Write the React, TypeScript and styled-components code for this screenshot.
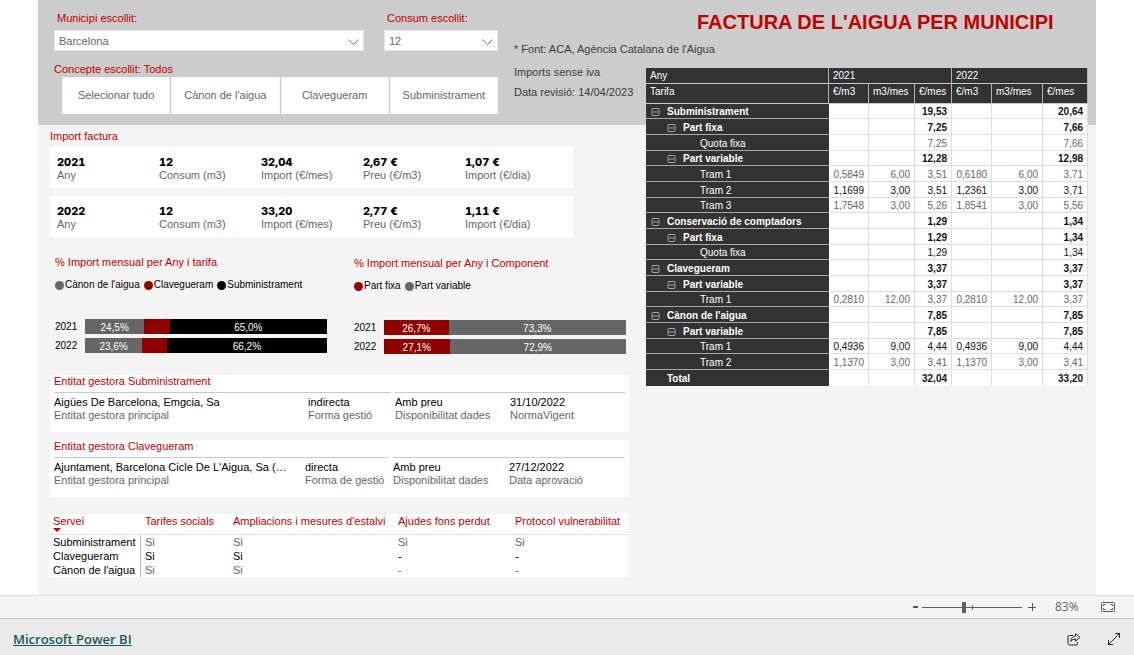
import React, { useState } from 'react';
import styled, { createGlobalStyle } from 'styled-components';

const GlobalStyle = createGlobalStyle`
  *, *::before, *::after { box-sizing: border-box; }
  body {
    margin: 0;
    background: #fff;
    color: #000;
    font-family: "Liberation Sans", Arial, sans-serif;
    font-size: 11px;
    line-height: 13px;
  }
  button, select, input { font: inherit; color: inherit; margin: 0; }
  h1, h2, p, dl, dd, dt, ul { margin: 0; padding: 0; font: inherit; }
`;

const RED = '#c00000';
const MUTED = '#666';

const Page = styled.div`
  display: flex;
  flex-direction: column;
  min-height: 100vh;
`;

const Canvas = styled.main`
  flex: 1;
  display: grid;
  grid-template-columns: 608fr 450fr;
  width: 100%;
  max-width: 1058px;
  margin: 0 auto;
  background: linear-gradient(#ccc 125px, #f4f4f4 125px);
`;

const LeftColumn = styled.div`
  min-width: 0;
`;

const RightColumn = styled.div`
  min-width: 0;
  padding-right: 8px;
`;

/* Filter band */

const FilterBand = styled.header`
  display: flex;
  height: 125px;
  padding-left: 16px;
`;

const Filters = styled.div`
  flex: 0 0 444px;
  padding-top: 12px;
`;

const FilterRow = styled.div`
  display: grid;
  grid-template-columns: 310px 114px;
  column-gap: 20px;
`;

const FilterLabel = styled.label`
  display: block;
  padding-left: 3px;
  margin-bottom: 5px;
  color: ${RED};
`;

const SelectBox = styled.div`
  position: relative;
  color: ${MUTED};
`;

const Select = styled.select`
  display: block;
  width: 100%;
  height: 21px;
  padding: 1px 24px 0 4px;
  appearance: none;
  border: 1px solid #e6e6e6;
  border-radius: 0;
  background: #fff;
`;

const Chevron = styled.svg`
  position: absolute;
  top: 9px;
  right: 5px;
  pointer-events: none;
`;

const SlicerTitle = styled.p`
  margin-top: 12px;
  color: ${RED};
`;

const ButtonRow = styled.div`
  display: grid;
  grid-template-columns: repeat(4, 1fr);
  column-gap: 1px;
  padding-left: 8px;
  margin-top: 1px;
`;

const SlicerButton = styled.button`
  height: 37px;
  padding: 0;
  border: 1px solid #f4f4f4;
  background: #fff;
  color: ${MUTED};
  white-space: nowrap;
`;

const Notes = styled.div`
  flex: 1;
  min-width: 0;
  padding: 43px 0 0 16px;
  color: #3b3b3b;
  white-space: nowrap;
`;

const Note = styled.p<{ $gap?: number }>`
  margin-bottom: ${(p) => p.$gap ?? 0}px;
`;

/* Left body */

const Body = styled.div`
  padding: 5px 17px 0 12px;
`;

const SectionTitle = styled.h2`
  color: ${RED};
`;

const InvoiceCards = styled.div`
  display: grid;
  gap: 8px;
  margin-top: 4px;
`;

const InvoiceCard = styled.dl`
  display: grid;
  grid-template-columns: repeat(5, 102px);
  width: 523px;
  max-width: 100%;
  height: 41px;
  padding: 9px 7px 0;
  background: #fff;
`;

const Fact = styled.div`
  display: flex;
  flex-direction: column-reverse;
  justify-content: flex-end;
  white-space: nowrap;
`;

const FactLabel = styled.dt`
  color: ${MUTED};
`;

const FactValue = styled.dd<{ $strong?: boolean }>`
  ${(p) => p.$strong && `
    font-family: Inter, "Liberation Sans", sans-serif;
    font-weight: 800;
    font-variant-numeric: tabular-nums;
  `}
`;

const Charts = styled.div`
  display: grid;
  grid-template-columns: 272px 272px;
  column-gap: 27px;
  padding: 19px 0 0 5px;
  margin-bottom: 17px;
`;

const Chart = styled.figure<{ $lower?: boolean }>`
  margin: 0;
  padding-top: ${(p) => (p.$lower ? 1 : 0)}px;
`;

const Legend = styled.ul`
  display: flex;
  gap: 4px;
  height: 12px;
  margin: 10px 0 28px;
  list-style: none;
  font-size: 10px;
  line-height: 12px;
`;

const LegendItem = styled.li<{ $color: string }>`
  display: flex;
  align-items: center;
  gap: 1px;
  white-space: nowrap;
  &::before {
    content: '';
    width: 9px;
    height: 9px;
    border-radius: 50%;
    background: ${(p) => p.$color};
  }
`;

const BarRow = styled.div`
  display: grid;
  grid-template-columns: 30px 1fr;
  grid-template-rows: 15px;
  margin-bottom: 4px;
  font-size: 10px;
  line-height: 15px;
`;

const Bar = styled.div`
  display: flex;
  color: #fff;
  line-height: 17px;
  text-align: center;
`;

const Segment = styled.div<{ $color: string }>`
  background: ${(p) => p.$color};
`;

/* Entities */

const EntityCard = styled.section`
  height: 57px;
  padding: 0 4px;
  margin-bottom: 8px;
  background: #fff;
`;

const EntityFacts = styled.dl<{ $cols: string; $split: string }>`
  display: grid;
  grid-template-columns: ${(p) => p.$cols};
  padding-top: 4px;
  margin-top: 4px;
  background:
    linear-gradient(#c8c8c8, #c8c8c8) left top / ${(p) => p.$split.split(' ')[0]} 1px no-repeat,
    linear-gradient(#c8c8c8, #c8c8c8) right top / ${(p) => p.$split.split(' ')[1]} 1px no-repeat;
`;

const ServiceTable = styled.table`
  width: 579px;
  margin: 17px 0 0 -1px;
  border-collapse: separate;
  border-spacing: 0;
  table-layout: fixed;
  background: #fff;
  white-space: nowrap;

  th, td {
    height: 14px;
    padding: 0 0 0 4px;
    font-weight: normal;
    text-align: left;
    vertical-align: top;
  }
  thead th {
    height: 21px;
    padding-top: 1px;
    border-bottom: 1px solid #dcdcdc;
    color: ${RED};
  }
  tbody th { border-right: 1px solid #b8b8b8; color: #000; }
  tbody th, tbody td { padding-top: 1px; }
  tbody td { color: ${MUTED}; }
  tbody tr:nth-child(2) td { color: #000; }
`;

const SortArrow = styled.svg`
  display: block;
`;

/* Tariff matrix */

const Title = styled.h1`
  padding: 11px 0 0 51px;
  height: 68px;
  color: ${RED};
  font-size: 20px;
  font-weight: bold;
  line-height: 23px;
  white-space: nowrap;
`;

const Matrix = styled.table`
  width: 442px;
  border-collapse: separate;
  border-spacing: 0;
  table-layout: fixed;
  background: #fff;
  font-size: 10px;
  line-height: 12px;
  white-space: nowrap;

  th, td { padding: 2px 4px 0; font-weight: normal; }
`;

const HeadRow = styled.tr<{ $height: number }>`
  height: ${(p) => p.$height}px;
  th {
    border-right: 1px solid #b4b4b4;
    border-bottom: 1px solid #c8c8c8;
    background: #333;
    color: #fff;
    text-align: left;
    vertical-align: top;
  }
`;

const DataRow = styled.tr<{ $tone: Tone }>`
  height: 16px;
  &:nth-child(3n + 1) { height: 15px; }
  td, th { font-weight: ${(p) => (p.$tone === 'bold' ? 'bold' : 'normal')}; }
  td {
    border-right: 1px solid #dedede;
    border-bottom: 1px solid #dedede;
    color: ${(p) => (p.$tone === 'muted' ? MUTED : '#111')};
    text-align: right;
  }
  &:last-child td, &:last-child th { border-bottom: 0; }
`;

const RowHead = styled.th<{ $level: number }>`
  && {
    padding-left: ${(p) => [5, 21, 54][p.$level]}px;
    border-bottom: 1px solid #a8a8a8;
    background: #333;
    color: #fff;
    text-align: left;
  }
`;

const RowHeadInner = styled.span`
  display: flex;
  align-items: center;
  gap: 7px;
`;

const Spacer = styled.span`
  width: 9px;
`;

const Toggle = styled.button`
  display: flex;
  padding: 0;
  border: 0;
  background: none;
`;

/* Bottom bars */

const ZoomBar = styled.div`
  display: flex;
  align-items: center;
  justify-content: flex-end;
  height: 23px;
  padding-right: 19px;
  border-top: 1px solid #dedede;
  background: #f4f4f4;
  color: #555;
`;

const PlainButton = styled.button`
  display: flex;
  align-items: center;
  justify-content: center;
  padding: 0;
  border: 0;
  background: none;
`;

const StepButton = styled(PlainButton)`
  width: 14px;
  height: 16px;
`;

const ZoomRange = styled.input`
  width: 100px;
  height: 12px;
  margin: 0 3px 0 0;
  appearance: none;
  background:
    linear-gradient(#605e5c, #605e5c) 50px 4px / 1px 5px no-repeat,
    linear-gradient(#605e5c, #605e5c) 0 6px / 100% 1px no-repeat;
  &::-webkit-slider-thumb {
    appearance: none;
    width: 4px;
    height: 11px;
    background: #605e5c;
  }
`;

const ZoomValue = styled.output`
  width: 24px;
  margin: 0 22px 0 16px;
  font-family: "Open Sans", "Noto Sans", sans-serif;
  font-size: 12px;
  line-height: 16px;
  color: #666;
`;

const Footer = styled.footer`
  display: flex;
  align-items: center;
  height: 37px;
  padding: 4px 13px 0;
  border-top: 1px solid #c6c6c6;
  background: #eaeaea;
`;

const BrandLink = styled.a`
  margin-right: auto;
  color: #19595b;
  font-family: "Open Sans", "Noto Sans", sans-serif;
  font-size: 13px;
  font-weight: 600;
  line-height: 18px;
`;

const FooterActions = styled.div`
  display: flex;
  gap: 26px;
`;

type Tone = 'bold' | 'muted' | 'dark';

type MatrixRow = { level: 0 | 1 | 2; name: string; tone: Tone; values: string[]; total?: boolean };

const sum = (level: 0 | 1, name: string, a: string, b: string): MatrixRow => ({
  level, name, tone: 'bold', values: ['', '', a, '', '', b],
});

const leaf = (name: string, tone: Tone, ...values: string[]): MatrixRow => ({ level: 2, name, tone, values });

const matrixRows: MatrixRow[] = [
  sum(0, 'Subministrament', '19,53', '20,64'),
  sum(1, 'Part fixa', '7,25', '7,66'),
  leaf('Quota fixa', 'muted', '', '', '7,25', '', '', '7,66'),
  sum(1, 'Part variable', '12,28', '12,98'),
  leaf('Tram 1', 'muted', '0,5849', '6,00', '3,51', '0,6180', '6,00', '3,71'),
  leaf('Tram 2', 'dark', '1,1699', '3,00', '3,51', '1,2361', '3,00', '3,71'),
  leaf('Tram 3', 'muted', '1,7548', '3,00', '5,26', '1,8541', '3,00', '5,56'),
  sum(0, 'Conservació de comptadors', '1,29', '1,34'),
  sum(1, 'Part fixa', '1,29', '1,34'),
  leaf('Quota fixa', 'dark', '', '', '1,29', '', '', '1,34'),
  sum(0, 'Clavegueram', '3,37', '3,37'),
  sum(1, 'Part variable', '3,37', '3,37'),
  leaf('Tram 1', 'muted', '0,2810', '12,00', '3,37', '0,2810', '12,00', '3,37'),
  sum(0, "Cànon de l'aigua", '7,85', '7,85'),
  sum(1, 'Part variable', '7,85', '7,85'),
  leaf('Tram 1', 'dark', '0,4936', '9,00', '4,44', '0,4936', '9,00', '4,44'),
  leaf('Tram 2', 'muted', '1,1370', '3,00', '3,41', '1,1370', '3,00', '3,41'),
  { ...sum(0, 'Total', '32,04', '33,20'), total: true },
];

const matrixColumns = [183, 40, 46, 37, 40, 51, 45];

const invoices = [
  ['2021', '12', '32,04', '2,67 €', '1,07 €'],
  ['2022', '12', '33,20', '2,77 €', '1,11 €'],
];
const invoiceLabels = ['Any', 'Consum (m3)', 'Import (€/mes)', 'Preu (€/m3)', 'Import (€/dia)'];

type Part = { share: number; text?: string; color: string };
const GREY = '#666';
const WINE = '#900000';

const tariffChart: { year: string; parts: Part[] }[] = [
  { year: '2021', parts: [{ share: 24.5, text: '24,5%', color: GREY }, { share: 10.5, color: WINE }, { share: 65, text: '65,0%', color: '#000' }] },
  { year: '2022', parts: [{ share: 23.6, text: '23,6%', color: GREY }, { share: 10.2, color: WINE }, { share: 66.2, text: '66,2%', color: '#000' }] },
];

const componentChart: { year: string; parts: Part[] }[] = [
  { year: '2021', parts: [{ share: 26.7, text: '26,7%', color: WINE }, { share: 73.3, text: '73,3%', color: GREY }] },
  { year: '2022', parts: [{ share: 27.1, text: '27,1%', color: WINE }, { share: 72.9, text: '72,9%', color: GREY }] },
];

const services = [
  ['Subministrament', 'Si', 'Si', 'Si', 'Si'],
  ['Clavegueram', 'Si', 'Si', '-', '-'],
  ["Cànon de l'aigua", 'Si', 'Si', '-', '-'],
];

function Dropdown({ id, label, options }: { id: string; label: string; options: string[] }) {
  return (
    <div>
      <FilterLabel htmlFor={id}>{label}</FilterLabel>
      <SelectBox>
        <Select id={id}>
          {options.map((o) => <option key={o}>{o}</option>)}
        </Select>
        <Chevron width="11" height="7" viewBox="0 0 11 7" fill="none" stroke="#777" aria-hidden="true">
          <path d="M0.5 0.5 L5.5 5.5 L10.5 0.5" />
        </Chevron>
      </SelectBox>
    </div>
  );
}

function BarChart({ title, legend, rows, lower }: {
  title: string; legend: [string, string][]; rows: { year: string; parts: Part[] }[]; lower?: boolean;
}) {
  return (
    <Chart $lower={lower}>
      <SectionTitle>{title}</SectionTitle>
      <Legend>
        {legend.map(([name, color]) => <LegendItem key={name} $color={color}>{name}</LegendItem>)}
      </Legend>
      {rows.map((row) => (
        <BarRow key={row.year}>
          <span>{row.year}</span>
          <Bar>
            {row.parts.map((p, i) => (
              <Segment key={i} $color={p.color} style={{ width: `${p.share}%` }}>{p.text}</Segment>
            ))}
          </Bar>
        </BarRow>
      ))}
    </Chart>
  );
}

function Entity({ title, cols, split, facts }: { title: string; cols: string; split: string; facts: [string, string][] }) {
  return (
    <EntityCard>
      <SectionTitle>{title}</SectionTitle>
      <EntityFacts $cols={cols} $split={split}>
        {facts.map(([value, label]) => (
          <Fact key={label}>
            <FactLabel>{label}</FactLabel>
            <FactValue>{value}</FactValue>
          </Fact>
        ))}
      </EntityFacts>
    </EntityCard>
  );
}

function TariffMatrix() {
  return (
    <Matrix>
      <colgroup>{matrixColumns.map((w, i) => <col key={i} width={w} />)}</colgroup>
      <thead>
        <HeadRow $height={16}>
          <th>Any</th>
          <th colSpan={3}>2021</th>
          <th colSpan={3}>2022</th>
        </HeadRow>
        <HeadRow $height={20}>
          {['Tarifa', '€/m3', 'm3/mes', '€/mes', '€/m3', 'm3/mes', '€/mes'].map((h, i) => <th key={i}>{h}</th>)}
        </HeadRow>
      </thead>
      <tbody>
        {matrixRows.map((row, r) => (
          <DataRow key={r} $tone={row.tone}>
            <RowHead scope="row" $level={row.level}>
              <RowHeadInner>
                {row.total && <Spacer />}
                {row.level < 2 && !row.total && (
                  <Toggle aria-label={`Contraure ${row.name}`}>
                    <svg width="9" height="8" viewBox="0 0 9 8" fill="none" stroke="#a6a6a6">
                      <rect x="1" y="0.5" width="7" height="7" rx="1" />
                      <path d="M2 4 H7" />
                    </svg>
                  </Toggle>
                )}
                {row.name}
              </RowHeadInner>
            </RowHead>
            {row.values.map((v, i) => <td key={i}>{v}</td>)}
          </DataRow>
        ))}
      </tbody>
    </Matrix>
  );
}

export default function App() {
  const [zoom, setZoom] = useState(83);
  return (
    <Page>
      <GlobalStyle />
      <Canvas>
        <LeftColumn>
          <FilterBand>
            <Filters>
              <FilterRow>
                <Dropdown id="municipi" label="Municipi escollit:" options={['Barcelona']} />
                <Dropdown id="consum" label="Consum escollit:" options={['12']} />
              </FilterRow>
              <SlicerTitle>Concepte escollit: Todos</SlicerTitle>
              <ButtonRow>
                {['Selecionar tudo', "Cànon de l'aigua", 'Clavegueram', 'Subministrament'].map((b) => (
                  <SlicerButton key={b}>{b}</SlicerButton>
                ))}
              </ButtonRow>
            </Filters>
            <Notes>
              <Note $gap={10}>* Font: ACA, Agència Catalana de l'Aigua</Note>
              <Note $gap={7}>Imports sense iva</Note>
              <Note>Data revisió: 14/04/2023</Note>
            </Notes>
          </FilterBand>
          <Body>
            <SectionTitle>Import factura</SectionTitle>
            <InvoiceCards>
              {invoices.map((values) => (
                <InvoiceCard key={values[0]}>
                  {values.map((v, i) => (
                    <Fact key={i}>
                      <FactLabel>{invoiceLabels[i]}</FactLabel>
                      <FactValue $strong>{v}</FactValue>
                    </Fact>
                  ))}
                </InvoiceCard>
              ))}
            </InvoiceCards>
            <Charts>
              <BarChart
                title="% Import mensual per Any i tarifa"
                legend={[["Cànon de l'aigua", GREY], ['Clavegueram', WINE], ['Subministrament', '#000']]}
                rows={tariffChart}
              />
              <BarChart
                lower
                title="% Import mensual per Any i Component"
                legend={[['Part fixa', WINE], ['Part variable', GREY]]}
                rows={componentChart}
              />
            </Charts>
            <Entity
              title="Entitat gestora Subministrament"
              cols="254px 87px 115px 1fr"
              split="337px 230px"
              facts={[
                ['Aigües De Barcelona, Emgcia, Sa', 'Entitat gestora principal'],
                ['indirecta', 'Forma gestió'],
                ['Amb preu', 'Disponibilitat dades'],
                ['31/10/2022', 'NormaVigent'],
              ]}
            />
            <Entity
              title="Entitat gestora Clavegueram"
              cols="251px 88px 116px 1fr"
              split="335px 232px"
              facts={[
                ["Ajuntament, Barcelona Cicle De L'Aigua, Sa (…", 'Entitat gestora principal'],
                ['directa', 'Forma de gestió'],
                ['Amb preu', 'Disponibilitat dades'],
                ['27/12/2022', 'Data aprovació'],
              ]}
            />
            <ServiceTable>
              <colgroup>{[92, 88, 165, 117, 117].map((w, i) => <col key={i} width={w} />)}</colgroup>
              <thead>
                <tr>
                  <th>
                    Servei
                    <SortArrow width="8" height="4" viewBox="0 0 8 4" fill={RED} aria-hidden="true">
                      <path d="M0 0 H8 L4 4 Z" />
                    </SortArrow>
                  </th>
                  {['Tarifes socials', "Ampliacions i mesures d'estalvi", 'Ajudes fons perdut', 'Protocol vulnerabilitat'].map((h) => (
                    <th key={h}>{h}</th>
                  ))}
                </tr>
              </thead>
              <tbody>
                {services.map(([name, ...cells]) => (
                  <tr key={name}>
                    <th scope="row">{name}</th>
                    {cells.map((c, i) => <td key={i}>{c}</td>)}
                  </tr>
                ))}
              </tbody>
            </ServiceTable>
          </Body>
        </LeftColumn>
        <RightColumn>
          <Title>FACTURA DE L'AIGUA PER MUNICIPI</Title>
          <TariffMatrix />
        </RightColumn>
      </Canvas>
      <ZoomBar>
        <StepButton aria-label="Reduir" onClick={() => setZoom(zoom - 1)}>
          <svg width="5" height="2" viewBox="0 0 5 2"><rect width="5" height="2" fill="#555" /></svg>
        </StepButton>
        <ZoomRange
          type="range"
          aria-label="Zoom"
          min={0}
          max={200}
          value={zoom}
          onChange={(e) => setZoom(Number(e.target.value))}
        />
        <StepButton aria-label="Ampliar" onClick={() => setZoom(zoom + 1)}>
          <svg width="8" height="8" viewBox="0 0 8 8" stroke="#555"><path d="M0 4.5 H8 M4.5 0 V8" /></svg>
        </StepButton>
        <ZoomValue>{zoom}%</ZoomValue>
        <PlainButton aria-label="Ajustar a la pàgina">
          <svg width="14" height="10" viewBox="0 0 14 10" fill="none" stroke="#555">
            <rect x="0.5" y="0.5" width="13" height="9" rx="1" />
            <path d="M2.5 4 V2.5 H4.5 M9.5 2.5 H11.5 V4 M11.5 6 V7.5 H9.5 M4.5 7.5 H2.5 V6" />
          </svg>
        </PlainButton>
      </ZoomBar>
      <Footer>
        <BrandLink href="#">Microsoft Power BI</BrandLink>
        <FooterActions>
          <PlainButton aria-label="Compartir">
            <svg width="14" height="13" viewBox="0 0 14 13" fill="none" stroke="#222">
              <path d="M6 2.5 H2.5 Q1 2.5 1 4 V10.5 Q1 12 2.5 12 H9 Q10.5 12 10.5 10.5 V9" />
              <path d="M8.5 0.8 L13 4.5 L8.5 8.2 V6 Q5.5 5.8 3.8 8.5 Q4.2 3.4 8.5 3 Z" strokeLinejoin="round" />
            </svg>
          </PlainButton>
          <PlainButton aria-label="Pantalla completa">
            <svg width="14" height="14" viewBox="0 0 14 14" fill="none" stroke="#222">
              <path d="M1.5 12.5 L12.5 1.5 M8 1.5 H12.5 V6 M1.5 8 V12.5 H6" />
            </svg>
          </PlainButton>
        </FooterActions>
      </Footer>
    </Page>
  );
}
